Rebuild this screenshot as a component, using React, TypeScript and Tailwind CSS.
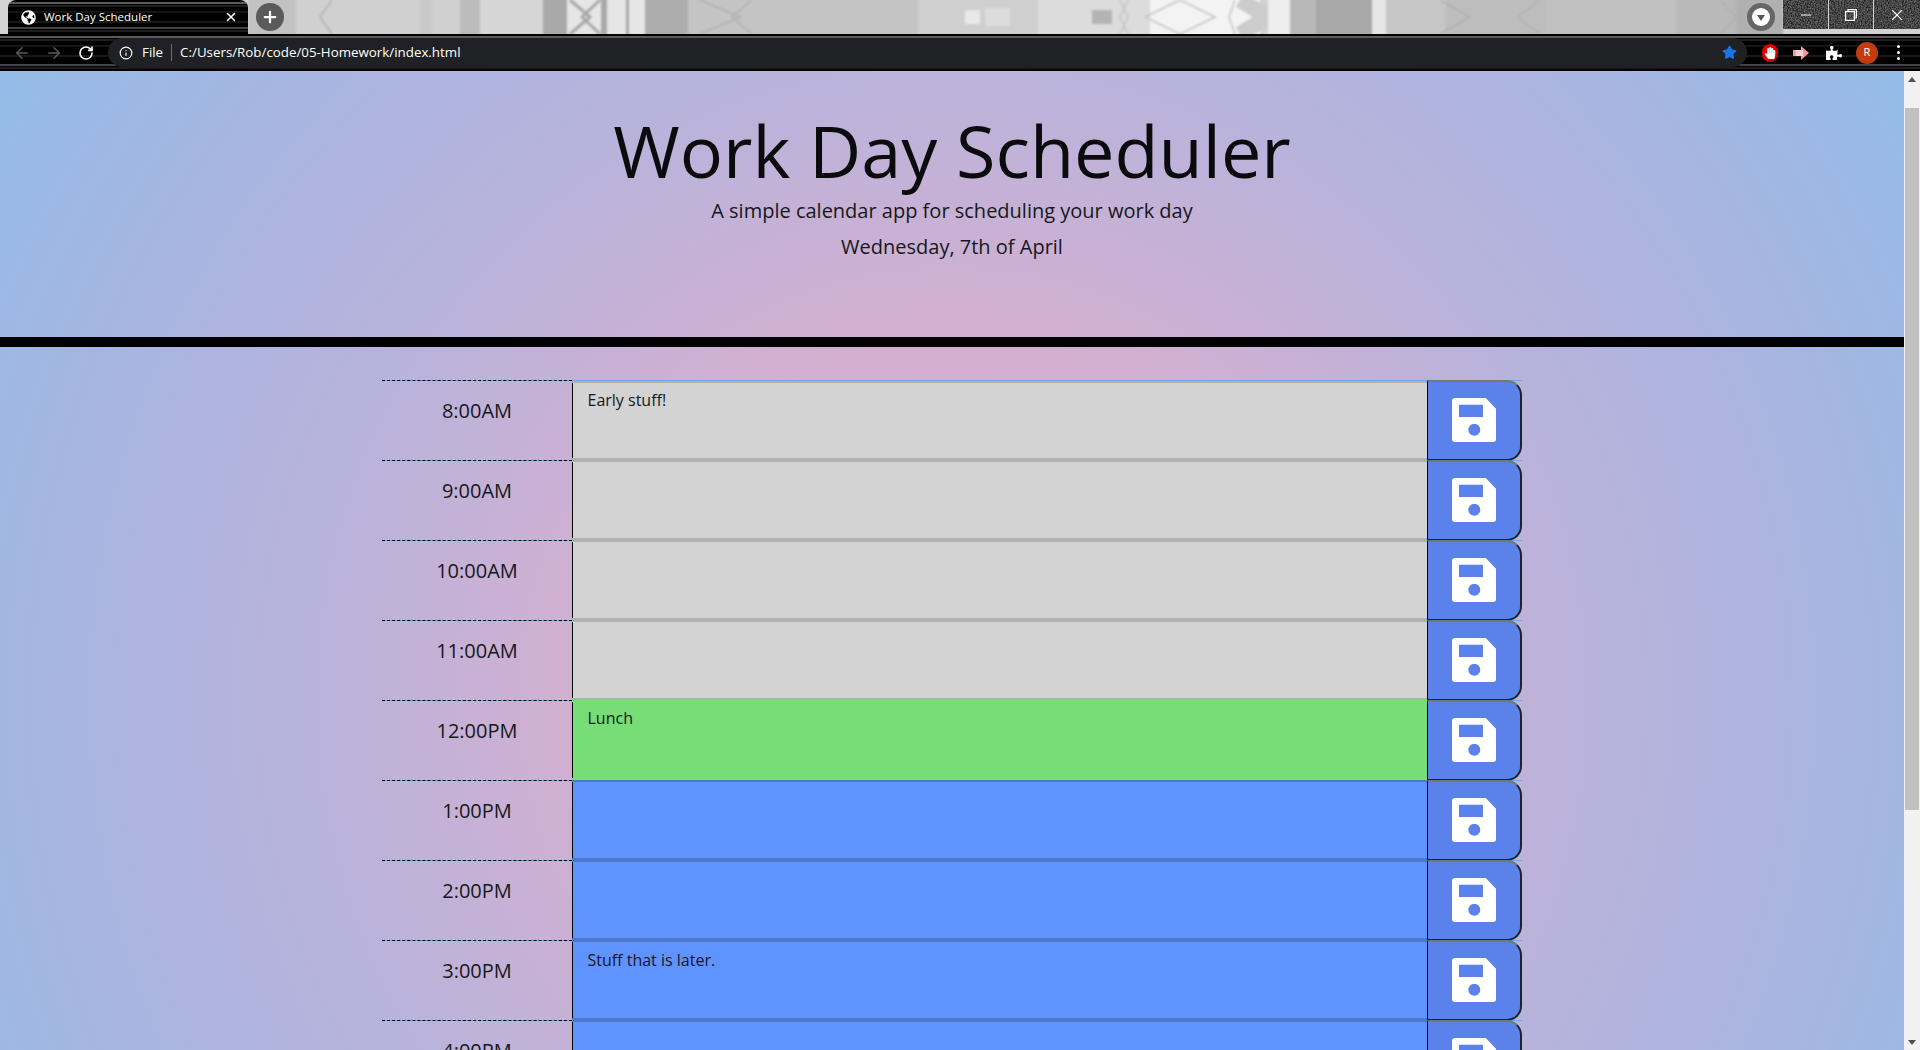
import { ArrowLeft, ArrowRight, RotateCw, Info, Star, X, Plus, Minus } from "lucide-react";
import { FaGlobeAmericas, FaPuzzlePiece, FaHandPaper } from "react-icons/fa";

type Kind = "past" | "present" | "future";

const rows: { time: string; text: string; kind: Kind }[] = [
  { time: "8:00AM", text: "Early stuff!", kind: "past" },
  { time: "9:00AM", text: "", kind: "past" },
  { time: "10:00AM", text: "", kind: "past" },
  { time: "11:00AM", text: "", kind: "past" },
  { time: "12:00PM", text: "Lunch", kind: "present" },
  { time: "1:00PM", text: "", kind: "future" },
  { time: "2:00PM", text: "", kind: "future" },
  { time: "3:00PM", text: "Stuff that is later.", kind: "future" },
  { time: "4:00PM", text: "", kind: "future" },
  { time: "5:00PM", text: "", kind: "future" },
];

const kindClass: Record<Kind, string> = {
  past: "bg-[#d3d3d3] border-[#b0b0b0] py-[6px]",
  present: "bg-[#77dd77] border-[#77dd77] py-[4px]",
  future: "bg-[#5f93ff] border-[#5077c9] py-[6px]",
};

function SaveIcon() {
  return (
    <svg width="44" height="44" viewBox="0 0 44 44" aria-hidden="true">
      <path
        fillRule="evenodd"
        fill="#fff"
        d="M3 0H33.7L44 10.7V41a3 3 0 0 1-3 3H3a3 3 0 0 1-3-3V3a3 3 0 0 1 3-3ZM7 6.7V19H31V6.7ZM22.3 25.7a6 6 0 1 0 0 12a6 6 0 1 0 0-12Z"
      />
    </svg>
  );
}

function TreeTexture() {
  const chev = (x: number, d: number) => `M${x} 0L${x + d} 17L${x} 34`;
  return (
    <svg className="absolute inset-0" width="1920" height="34" viewBox="0 0 1920 34" aria-hidden="true">
      <defs>
        <filter id="grain" x="0" y="0" width="100%" height="100%">
          <feTurbulence type="fractalNoise" baseFrequency="0.7" numOctaves="2" seed="4" />
          <feColorMatrix values="0 0 0 0 0  0 0 0 0 0  0 0 0 0 0  0 0 0 1.4 -0.35" />
        </filter>
      </defs>
      <g className="blur-[1px]">
        <rect x="-4" y="-4" width="1930" height="42" fill="#d2d2d2" />
        <rect x="248" y="-4" width="48" height="42" fill="#c2c2c2" />
        <rect x="296" y="-4" width="164" height="42" fill="#d0d0d0" />
        <rect x="420" y="-4" width="12" height="42" fill="#c8c8c8" />
        <rect x="460" y="-4" width="20" height="42" fill="#bcbcbc" />
        <rect x="480" y="-4" width="63" height="42" fill="#d6d6d6" />
        <rect x="543" y="-4" width="24" height="42" fill="#a9a9a9" />
        <rect x="567" y="-4" width="78" height="42" fill="#e6e6e6" />
        <rect x="601" y="-4" width="6" height="42" fill="#a9a9a9" />
        <rect x="626" y="-4" width="3" height="42" fill="#a9a9a9" />
        <path d="M570 0L590 17L570 34M600 0L582 17L600 34" stroke="#a8a8a8" strokeWidth="3" fill="none" />
        <rect x="645" y="-4" width="43" height="42" fill="#adadad" />
        <rect x="688" y="-4" width="230" height="42" fill="#c4c4c4" />
        <rect x="918" y="-4" width="120" height="42" fill="#cfcfcf" />
        <rect x="965" y="10" width="15" height="14" fill="#e8e8e8" />
        <rect x="985" y="8" width="25" height="18" fill="#dcdcdc" />
        <rect x="1038" y="-4" width="112" height="42" fill="#dcdcdc" />
        <rect x="1092" y="10" width="20" height="14" fill="#b4b4b4" />
        <rect x="1150" y="-4" width="110" height="42" fill="#f3f3f3" />
        <path d={chev(1240, 28)} stroke="#cccccc" strokeWidth="16" fill="none" />
        <rect x="1268" y="-4" width="22" height="42" fill="#ededed" />
        <rect x="1290" y="-4" width="26" height="42" fill="#b8b8b8" />
        <rect x="1316" y="-4" width="56" height="42" fill="#a8a8a8" />
        <rect x="1372" y="-4" width="14" height="42" fill="#e6e6e6" />
        <rect x="1386" y="-4" width="60" height="42" fill="#c6c6c6" />
        <rect x="1446" y="-4" width="100" height="42" fill="#bdbdbd" />
        <rect x="1546" y="-4" width="130" height="42" fill="#c0c0c0" />
        <rect x="1676" y="-4" width="60" height="42" fill="#b9b9b9" />
        <rect x="1736" y="-4" width="47" height="42" fill="#b0b0b0" />
        <path d={`${chev(332, -12)}${chev(752, -20)}${chev(700, 40)}${chev(1440, 30)}${chev(1540, -22)}${chev(1720, 16)}`} stroke="#b0b0b0" strokeWidth="1.5" fill="none" />
        <path d={`${chev(1180, -35)}${chev(1180, 35)}${chev(1235, -6)}${chev(1120, 8)}${chev(1128, -8)}`} stroke="#c4c4c4" strokeWidth="1.5" fill="none" />
      </g>
      <rect x="1783" width="137" height="29" fill="#6a6a6a" />
      <rect x="1783" width="137" height="29" filter="url(#grain)" />
    </svg>
  );
}

function Streaks({ w, h }: { w: number; h: number }) {
  return (
    <svg className="absolute inset-0" width={w} height={h} viewBox={`0 0 ${w} ${h}`} aria-hidden="true">
      <rect width={w} height={h} fill="#000" />
      <g className="blur-[0.4px]">
        <path d={`M-4 3H${w + 4}`} stroke="#7a7a7a" strokeWidth="1.4" />
        <path d={`M-4 6H${w + 4}`} stroke="#3c3c3c" strokeWidth="1" />
        <path d={`M-4 12H${w + 4}`} stroke="#2a2a2a" strokeWidth="1" />
        <path d={`M-4 22H${w + 4}`} stroke="#303030" strokeWidth="1" />
        <path d={`M-4 ${h - 6}H${w + 4}`} stroke="#5a5a5a" strokeWidth="1.4" />
        <path d={`M-4 ${h - 3}H${w + 4}`} stroke="#3a3a3a" strokeWidth="1" />
      </g>
    </svg>
  );
}

function Chrome() {
  return (
    <div className="shrink-0 font-['Open_Sans',sans-serif]">
      <div className="relative h-[34px] w-[1920px] overflow-hidden">
        <TreeTexture />
        <div className="relative flex h-full items-center pl-2">
          <div className="relative h-[34px] w-[240px] overflow-hidden rounded-t-lg">
            <Streaks w={240} h={34} />
            <div className="relative flex h-full items-center pl-[13px] pr-[10px] text-white">
              <FaGlobeAmericas className="h-[15px] w-[15px] shrink-0" />
              <span className="ml-[8px] flex-1 text-[11.5px] leading-none">Work Day Scheduler</span>
              <X className="h-[14px] w-[14px]" strokeWidth={2.5} />
            </div>
          </div>
          <div className="ml-2 flex h-[28px] w-[28px] items-center justify-center rounded-full bg-[#5a5a5a] text-white">
            <Plus className="h-[18px] w-[18px]" strokeWidth={3} />
          </div>
          <div className="ml-auto flex h-full items-start">
            <div className="mr-[8px] mt-[3px] flex h-[28px] w-[28px] items-center justify-center rounded-full bg-[#666666]">
              <div className="flex h-[18px] w-[18px] items-center justify-center rounded-full bg-white">
                <div className="mt-px h-0 w-0 border-x-[4px] border-t-[6px] border-x-transparent border-t-[#555555]" />
              </div>
            </div>
            <div className="flex h-[29px] w-[137px] text-white">
              <div className="flex w-[46px] items-center justify-center border-r border-[#d0d0d0]">
                <Minus className="h-[16px] w-[16px]" strokeWidth={1.5} />
              </div>
              <div className="flex w-[45px] items-center justify-center border-r border-[#d0d0d0]">
                <svg width="12" height="12" viewBox="0 0 12 12" fill="none" stroke="#fff" strokeWidth="1.2" aria-hidden="true">
                  <rect x="0.6" y="2.6" width="8.8" height="8.8" />
                  <path d="M3 2.6V0.6H11.4V9H9.4" />
                </svg>
              </div>
              <div className="flex w-[46px] items-center justify-center">
                <X className="h-[18px] w-[18px]" strokeWidth={1.5} />
              </div>
            </div>
          </div>
        </div>
      </div>
      <div className="relative h-[37px] w-[1920px] overflow-hidden">
        <Streaks w={1920} h={37} />
        <div className="relative flex h-full items-center">
          <div className="flex w-[108px] items-center pl-[13px]">
            <ArrowLeft className="h-[18px] w-[18px] text-[#5a5a5a]" />
            <ArrowRight className="ml-[14px] h-[18px] w-[18px] text-[#5a5a5a]" />
            <RotateCw className="ml-[15px] h-[16px] w-[16px] text-white" strokeWidth={2.5} />
          </div>
          <div className="flex h-[29px] w-[1639px] items-center rounded-full bg-[#202124] pl-[11px] pr-[10px] text-[13.33px] text-white">
            <Info className="h-[14px] w-[14px]" />
            <span className="ml-[9px] leading-none">File</span>
            <div className="ml-[8px] h-[17px] w-px bg-[#6a6a6a]" />
            <span className="ml-[8px] leading-none">C:/Users/Rob/code/05-Homework/index.html</span>
            <Star className="ml-auto h-[15px] w-[15px] fill-[#1a73e8] text-[#1a73e8]" />
          </div>
          <div className="ml-[15px] flex h-[18px] w-[16px] items-center justify-center rounded-full bg-[#e00000] text-white">
            <FaHandPaper className="h-[12px] w-[12px]" />
          </div>
          <svg className="ml-[15px]" width="16" height="14" viewBox="0 0 16 14" aria-hidden="true">
            <path d="M0 4H8V0L16 7L8 14V10H0Z" fill="#f59a9a" />
            <rect x="3" y="4" width="7" height="6" fill="#fbd0d0" />
          </svg>
          <FaPuzzlePiece className="ml-[17px] h-[16px] w-[16px] text-white" />
          <div className="ml-[14px] flex h-[22px] w-[22px] items-center justify-center rounded-full bg-[#c33c0e] text-[11px] text-white">R</div>
          <div className="ml-[19px] flex flex-col gap-[3px]">
            <div className="h-[3px] w-[3px] rounded-full bg-white" />
            <div className="h-[3px] w-[3px] rounded-full bg-white" />
            <div className="h-[3px] w-[3px] rounded-full bg-white" />
          </div>
        </div>
      </div>
    </div>
  );
}

function Row({ time, text, kind, first }: { time: string; text: string; kind: Kind; first: boolean }) {
  return (
    <div className="flex h-20 border-t border-[#6fa8ea]">
      <div className="-mt-px h-20 w-[190px] border-t border-dashed border-black pt-[15px] text-center text-[20px] leading-[30px]">
        {time}
      </div>
      <textarea
        readOnly
        defaultValue={text}
        className={`${first ? "h-[79px] !py-[5px]" : "-mt-px h-20"} w-[855px] resize-none border-y-2 border-l-0 ${kindClass[kind]} shadow-[inset_1px_0_0_#000] px-[15.5px] text-[16px] leading-[24px] text-[#16181b] outline-none`}
      />
      <button className="-mt-px flex h-[81px] w-[95px] items-center justify-center rounded-r-[15px] border-y-2 border-r-2 border-l border-t-[#777777] border-r-[#222222] border-b-[#222222] border-l-black bg-[#5a82ea] pb-[2px] pr-px">
        <SaveIcon />
      </button>
    </div>
  );
}

export default function App() {
  return (
    <div className="flex h-[1050px] w-[1920px] flex-col overflow-hidden bg-black font-['Open_Sans',sans-serif] text-[#16181b]">
      <Chrome />
      <div className="flex min-h-0 flex-1">
        <div className="h-full w-[1904px] overflow-hidden bg-[radial-gradient(circle_1141px_at_952px_629px,#dfadcb_0%,#d4afd0_31%,#bab3db_55%,#a6b5e1_80%,#94bce8_100%)]">
          <header className="flex h-[276px] flex-col items-center border-b-[10px] border-black pt-[36px]">
            <h1 className="text-[72px] font-normal leading-[86px] text-[#0b0b0e]">Work Day Scheduler</h1>
            <p className="mt-[3px] text-[20px] leading-[30px]">A simple calendar app for scheduling your work day</p>
            <p className="mt-[6px] text-[20px] leading-[30px]">Wednesday, 7th of April</p>
          </header>
          <main className="mx-auto mt-[33px] w-[1140px]">
            {rows.map((r, i) => (
              <Row key={r.time} time={r.time} text={r.text} kind={r.kind} first={i === 0} />
            ))}
          </main>
        </div>
        <div className="flex h-full w-4 flex-col items-center bg-[#f1f1f1]">
          <div className="mt-[6px] h-0 w-0 border-x-[4px] border-b-[5px] border-x-transparent border-b-[#505050]" />
          <div className="mt-[26px] h-[702px] w-[14px] bg-[#c1c1c1]" />
          <div className="mt-auto mb-[5px] h-0 w-0 border-x-[4px] border-t-[5px] border-x-transparent border-t-[#505050]" />
        </div>
      </div>
    </div>
  );
}
